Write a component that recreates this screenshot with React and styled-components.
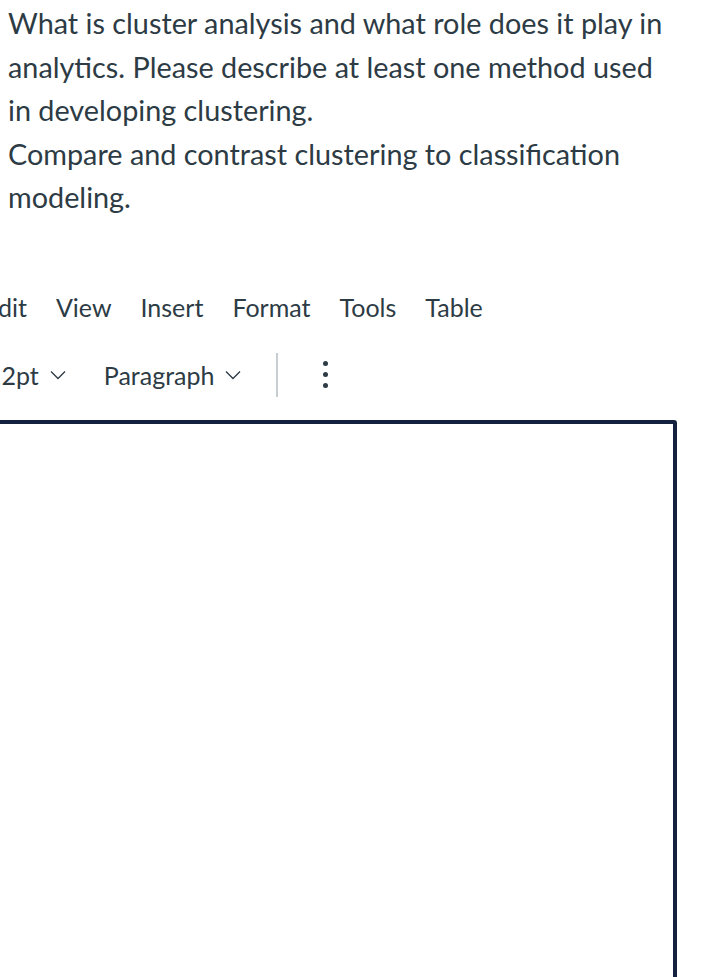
import styled, { createGlobalStyle } from "styled-components";

const GlobalStyle = createGlobalStyle`
  html, body {
    margin: 0;
    padding: 0;
    background: #ffffff;
    overflow: hidden;
  }
  body {
    font-family: Lato, "Noto Sans", sans-serif;
    color: #2d3b45;
  }
`;

const Page = styled.div`
  width: 709px;
  height: 977px;
  overflow: hidden;
`;

const Question = styled.div`
  width: 670px;
  padding: 2px 0 0 8px;
  font-size: 28.8px;
  line-height: 43.5px;
`;

const QuestionLine = styled.p`
  margin: 0;
`;

const Editor = styled.div`
  margin-top: 67px;
  margin-left: -60px;
  width: 737px;
`;

const MenuBar = styled.div`
  display: flex;
  gap: 29px;
  font-size: 25px;
  line-height: 40px;
  padding-left: 44px;
`;

const MenuItem = styled.span`
  color: #2d3b45;
`;

const ToolBar = styled.div`
  display: flex;
  align-items: center;
  height: 46px;
  margin-top: 25px;
  font-size: 25px;
  padding-left: 47px;
`;

const Dropdown = styled.div`
  display: flex;
  align-items: center;
  gap: 11px;
  margin-right: ${(p) => p.$gap || 0}px;
`;

const Chevron = () => (
  <svg width="16" height="10" viewBox="0 0 16 10" fill="none">
    <path d="M1 1.5 L8 8.5 L15 1.5" stroke="#2d3b45" strokeWidth="1.3" />
  </svg>
);

const Separator = styled.div`
  width: 2px;
  height: 44px;
  background: #c7cdd1;
  margin: 0 45px 0 35px;
`;

const More = styled.div`
  display: flex;
  flex-direction: column;
  gap: 6px;
`;

const Dot = styled.span`
  width: 5px;
  height: 5px;
  border-radius: 50%;
  background: #2d3b45;
`;

const EditArea = styled.div`
  margin-top: 22px;
  height: 600px;
  border: 4px solid #13213f;
  border-radius: 3px;
`;

export default function App() {
  return (
    <Page>
      <GlobalStyle />
      <Question>
        <QuestionLine>
          What is cluster analysis and what role does it play in analytics.
          Please describe at least one method used in developing clustering.
        </QuestionLine>
        <QuestionLine>
          Compare and contrast clustering to classification modeling.
        </QuestionLine>
      </Question>
      <Editor>
        <MenuBar>
          {["Edit", "View", "Insert", "Format", "Tools", "Table"].map((m) => (
            <MenuItem key={m}>{m}</MenuItem>
          ))}
        </MenuBar>
        <ToolBar>
          <Dropdown $gap={38}>
            <span>12pt</span>
            <Chevron />
          </Dropdown>
          <Dropdown>
            <span>Paragraph</span>
            <Chevron />
          </Dropdown>
          <Separator />
          <More>
            <Dot />
            <Dot />
            <Dot />
          </More>
        </ToolBar>
        <EditArea />
      </Editor>
    </Page>
  );
}
